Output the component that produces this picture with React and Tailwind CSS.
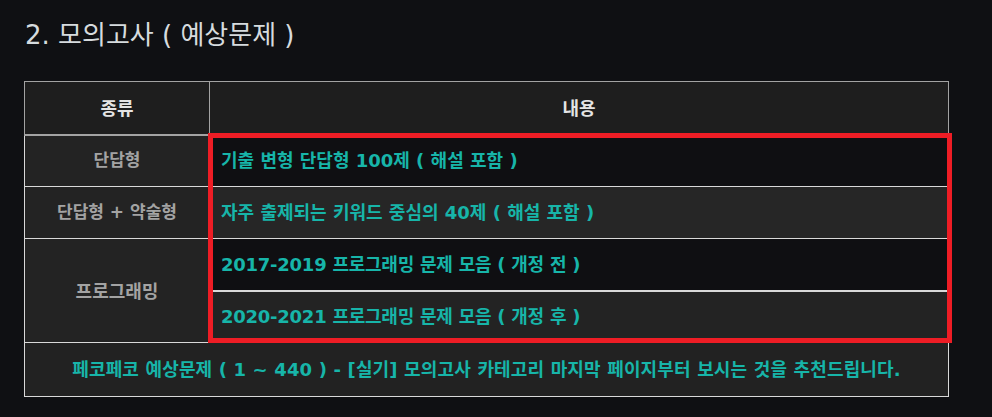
const rows = [
  { kind: '단답형', text: '기출 변형 단답형 100제 ( 해설 포함 )', dark: true },
  { kind: '단답형 + 약술형', text: '자주 출제되는 키워드 중심의 40제 ( 해설 포함 )', dark: false },
]

const programming = [
  { text: '2017-2019 프로그래밍 문제 모음 ( 개정 전 )', dark: true },
  { text: '2020-2021 프로그래밍 문제 모음 ( 개정 후 )', dark: false },
]

const latin = { fontFamily: '"DejaVu Sans", "Noto Sans CJK KR", sans-serif' }

export default function App() {
  return (
    <div
      className="min-h-[417px] w-full bg-[#0f1013] px-6 pt-[18px]"
      style={{ fontFamily: '"Noto Sans CJK KR", "Noto Sans", sans-serif' }}
    >
      <h2 className="pl-px text-[26px] leading-[34px] font-normal text-[#d6dbde]" style={latin}>
        2. 모의고사 ( 예상문제 )
      </h2>

      <div className="relative mt-[29px] w-[925px]">
        <table className="w-full border-collapse text-[18px] font-bold">
          <colgroup>
            <col className="w-[185px]" />
            <col />
          </colgroup>
          <thead>
            <tr className="h-[53px] bg-[#1e1e1e] text-[#e4e4e4]">
              <th className="border border-b-2 border-[#a3a3a3] font-bold">종류</th>
              <th className="border border-b-2 border-[#a3a3a3] font-bold">내용</th>
            </tr>
          </thead>
          <tbody>
            {rows.map((row) => (
              <tr className="h-[52px]" key={row.kind}>
                <td className="border border-[#d9d9d9] bg-[#232323] text-center text-[17px] text-[#a3a3a3]" style={latin}>
                  {row.kind}
                </td>
                <td
                  className={`border border-[#d9d9d9] pl-[11px] text-[#17b5a9] ${row.dark ? 'bg-[#0f0f12]' : 'bg-[#262626]'}`}
                  style={latin}
                >
                  {row.text}
                </td>
              </tr>
            ))}
            {programming.map((row, i) => (
              <tr className="h-[52px]" key={row.text}>
                {i === 0 ? (
                  <td rowSpan={2} className="border border-[#d9d9d9] bg-[#232323] text-center text-[#a3a3a3]">
                    프로그래밍
                  </td>
                ) : null}
                <td
                  className={`border border-[#d9d9d9] pl-[11px] tracking-[-0.25px] text-[#17b5a9] ${row.dark ? 'border-b-2 bg-[#0f0f12]' : 'bg-[#232323]'}`}
                  style={latin}
                >
                  {row.text}
                </td>
              </tr>
            ))}
            <tr className="h-[54px]">
              <td
                colSpan={2}
                className="border border-[#d9d9d9] bg-[#222222] text-center tracking-[0.15px] text-[#17b5a9]"
                style={latin}
              >
                페코페코 예상문제 ( 1 ~ 440 ) - [실기] 모의고사 카테고리 마지막 페이지부터 보시는 것을 추천드립니다.
              </td>
            </tr>
          </tbody>
        </table>

        <div className="pointer-events-none absolute top-[52px] left-[184px] h-[210px] w-[744px] border-[5px] border-[#ee1d25]" />
      </div>
    </div>
  )
}
